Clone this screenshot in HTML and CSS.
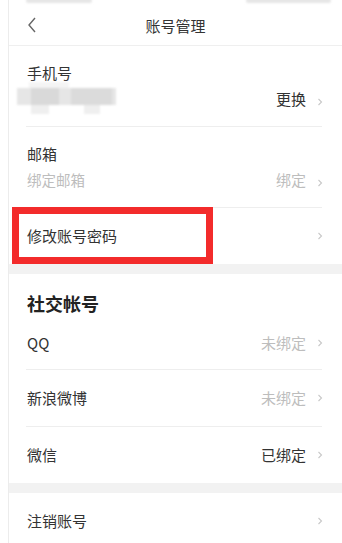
FILE: index.html
```html
<!DOCTYPE html>
<html lang="zh-CN">
<head>
<meta charset="utf-8">
<title>账号管理</title>
<link rel="stylesheet" href="styles.css">
</head>
<body>
<div class="page">
  <div class="status">
    <span class="sb sb-l"></span>
    <span class="sb sb-r"></span>
  </div>
  <div class="nav">
    <span class="back">
      <svg width="10" height="16" viewBox="0 0 10 16"><polyline points="8,1 2,8 8,15" fill="none" stroke="#666" stroke-width="1.4"/></svg>
    </span>
    <span class="title">账号管理</span>
    <span></span>
  </div>

  <div class="group">
    <div class="row two">
      <div class="main">
        <div class="label">手机号</div>
        <div class="sub"><span class="mosaic"><i class="m0"></i><i class="m1"></i><i class="m2"></i><i class="m3"></i><i class="m4"></i><i class="m5"></i></span></div>
      </div>
      <span class="val dark">更换</span><span class="chev"></span>
    </div>
    <div class="row two">
      <div class="main">
        <div class="label">邮箱</div>
        <div class="sub light">绑定邮箱</div>
      </div>
      <span class="val">绑定</span><span class="chev"></span>
    </div>
    <div class="row one last marked">
      <div class="main"><div class="label">修改账号密码</div></div>
      <span class="chev"></span>
      <span class="mark"></span>
    </div>
  </div>

  <div class="gap"></div>

  <div class="group">
    <div class="heading">社交帐号</div>
    <div class="row one qq">
      <div class="main"><div class="label">QQ</div></div>
      <span class="val">未绑定</span><span class="chev"></span>
    </div>
    <div class="row one">
      <div class="main"><div class="label">新浪微博</div></div>
      <span class="val">未绑定</span><span class="chev"></span>
    </div>
    <div class="row one last">
      <div class="main"><div class="label">微信</div></div>
      <span class="val dark">已绑定</span><span class="chev"></span>
    </div>
  </div>

  <div class="gap"></div>

  <div class="group">
    <div class="row one last">
      <div class="main"><div class="label">注销账号</div></div>
      <span class="chev"></span>
    </div>
  </div>
</div>
</body>
</html>
```

FILE: styles.css
```css
html, body {
  margin: 0;
  padding: 0;
  background: #fff;
}
body {
  font-family: "Noto Sans CJK SC", "Noto Sans", sans-serif;
  color: #333;
  overflow: hidden;
}
.page {
  margin-left: 8px;
  border-left: 1px solid #ececec;
  min-height: 543px;
}
.status {
  height: 10px;
  position: relative;
}
.sb {
  position: absolute;
  top: -2px;
  height: 5px;
  background: #e6e6e6;
  border-radius: 2px;
  filter: blur(1px);
}
.sb-l { left: 17px; width: 66px; }
.sb-r { left: 237px; width: 85px; }
.nav {
  height: 35px;
  border-bottom: 1px solid #efefef;
  display: grid;
  grid-template-columns: 60px 1fr 60px;
  align-items: center;
}
.back {
  padding-left: 18px;
  display: flex;
  align-items: center;
  padding-bottom: 5px;
}
.title {
  text-align: center;
  font-size: 15px;
  color: #333;
  padding-bottom: 5px;
}
.group {
  padding: 0 20px 0 17px;
}
.row {
  display: flex;
  align-items: center;
  border-bottom: 1px solid #eeeeee;
  position: relative;
}
.row.last { border-bottom: none; }
.row.two {
  padding: 16px 0 14px;
  align-items: flex-end;
}
.row.two .val, .row.two .chev { margin-bottom: 5px; }
.row.one { height: 56px; }
.row.qq { height: 53px; padding-top: 1px; }
.main { flex: 1; min-width: 0; }
.label {
  font-size: 15px;
  line-height: 22px;
  color: #333;
  padding-left: 1px;
}
.row.two .label { margin-bottom: 2px; }
.sub {
  height: 26px;
  font-size: 14.5px;
  line-height: 26px;
}
.sub.light { color: #bdbdbd; padding-left: 1px; }
.val {
  font-size: 15px;
  color: #bdbdbd;
  line-height: 16px;
}
.val.dark { color: #333; }
.chev {
  width: 6px;
  height: 10px;
  margin-left: 11px;
  margin-right: -1px;
  background: no-repeat center / 6px 10px url("data:image/svg+xml,%3Csvg xmlns='http://www.w3.org/2000/svg' width='6' height='10' viewBox='0 0 6 10'%3E%3Cpolyline points='1.5,2 4.5,5 1.5,8' fill='none' stroke='%23c8c8c8' stroke-width='1.1'/%3E%3C/svg%3E");
}
.mosaic {
  display: block;
  position: relative;
  width: 100px;
  height: 26px;
  margin-left: -9px;
  filter: blur(0.8px);
}
.mosaic i {
  position: absolute;
  display: block;
}
.m0 { left: 12px; top: -4px; width: 40px; height: 6px; background: #f4f4f4; }
.m1 { left: 0; top: 2px; width: 99px; height: 17px; background: #e6e6e6; }
.m2 { left: 14px; top: 2px; width: 28px; height: 17px; background: #d9d9d9; }
.m3 { left: 54px; top: 2px; width: 41px; height: 17px; background: #dbdbdb; }
.m4 { left: 14px; top: 19px; width: 18px; height: 9px; background: #efefef; }
.m5 { left: 67px; top: 19px; width: 16px; height: 9px; background: #efefef; }
.mark {
  position: absolute;
  left: -14px;
  top: -1px;
  width: 187px;
  height: 43px;
  border: 7px solid #f32b2b;
  pointer-events: none;
}
.gap {
  height: 10px;
  background: #f2f2f2;
}
.heading {
  font-size: 18px;
  font-weight: bold;
  line-height: 24px;
  padding-top: 17px;
  padding-left: 1px;
  color: #222;
}
```
